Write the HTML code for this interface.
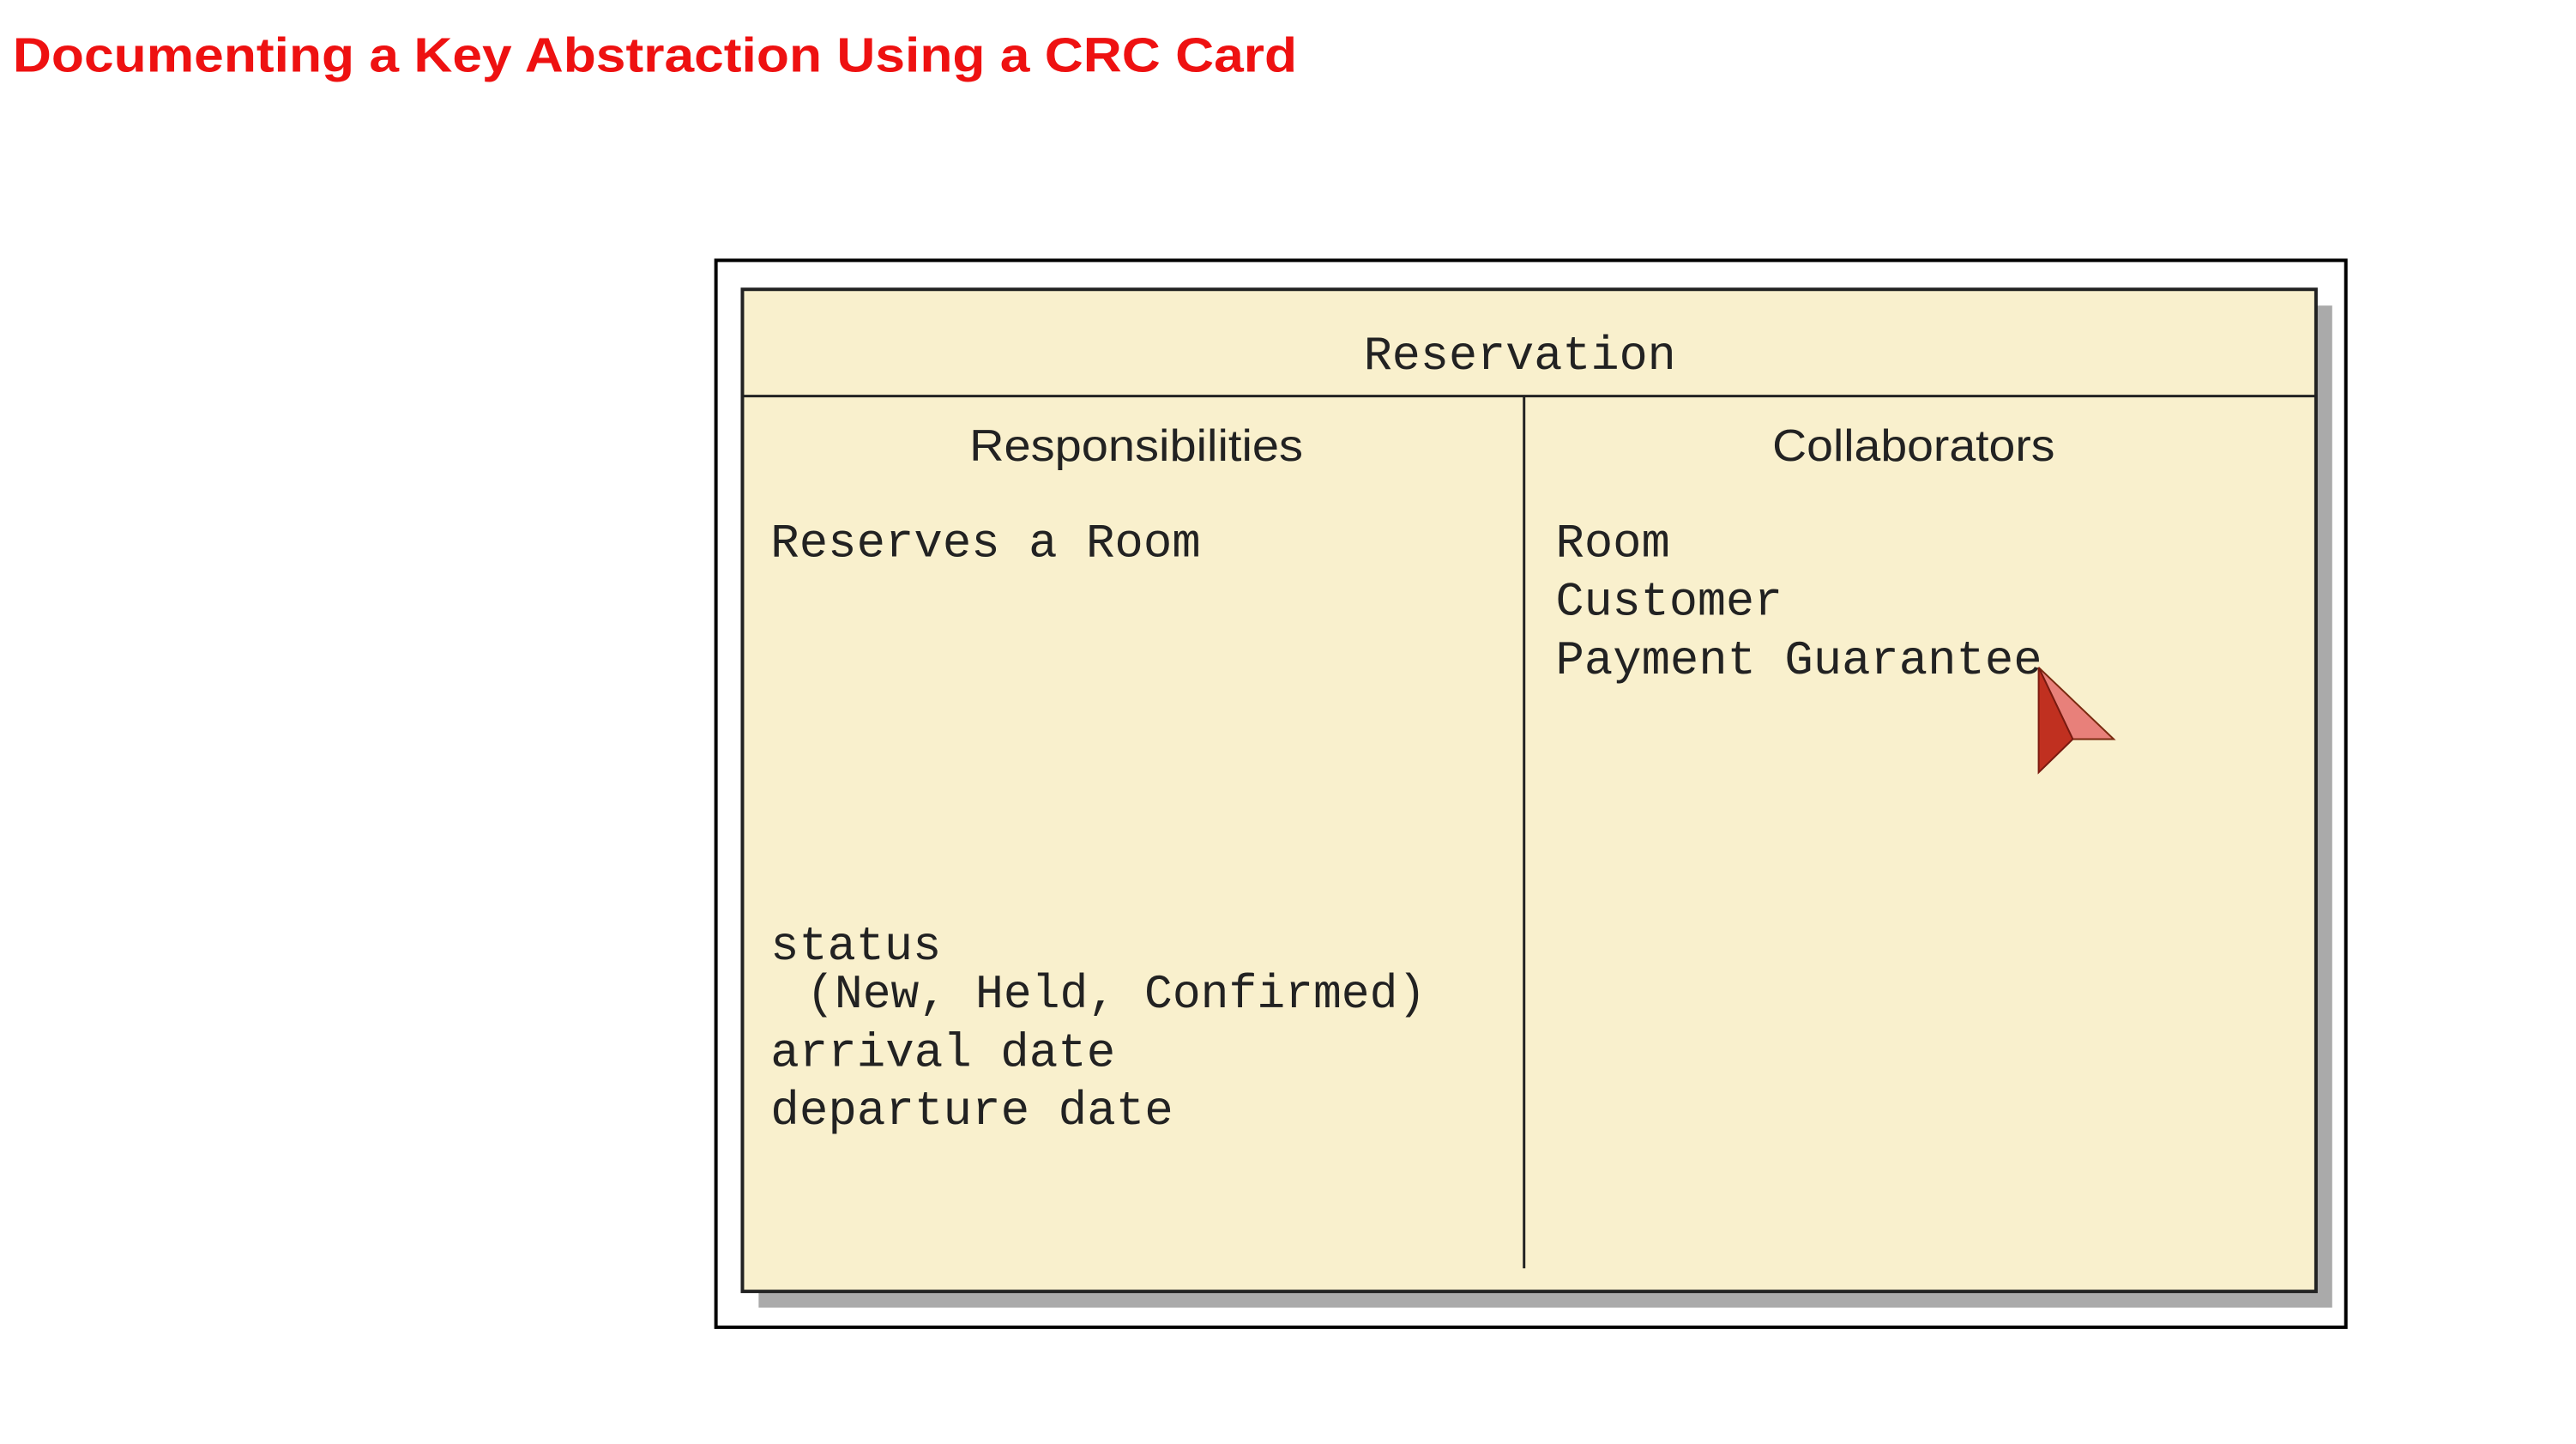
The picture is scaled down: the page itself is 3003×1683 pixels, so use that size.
<!DOCTYPE html>
<html><head><meta charset="utf-8"><style>
html,body{margin:0;padding:0;background:#fff;}
svg{display:block;}
</style></head><body>
<svg width="3003" height="1683" viewBox="0 0 3003 1683" xmlns="http://www.w3.org/2000/svg">
<g transform="scale(0.9948)">
<text x="15" y="84" font-family="Liberation Sans, Arial, sans-serif" font-weight="bold" font-size="57" fill="#ee1111" textLength="1505" lengthAdjust="spacingAndGlyphs">Documenting a Key Abstraction Using a CRC Card</text>
<rect x="839" y="305" width="1910" height="1250" fill="#fff" stroke="#000" stroke-width="4"/>
<rect x="889" y="358" width="1844" height="1174" fill="#aaaaaa"/>
<rect x="870" y="339" width="1844" height="1174" fill="#f9f0cd" stroke="#222" stroke-width="4"/>
<line x1="870" y1="464" x2="2714" y2="464" stroke="#222" stroke-width="3"/>
<line x1="1786" y1="464" x2="1786" y2="1486" stroke="#222" stroke-width="3"/>
<g font-family="Liberation Mono, Courier New, monospace" fill="#222" font-size="56">
<text x="1598" y="432" textLength="366" lengthAdjust="spacingAndGlyphs">Reservation</text>
<text x="903" y="652" textLength="504" lengthAdjust="spacingAndGlyphs">Reserves a Room</text>
<text x="1823" y="652" textLength="134" lengthAdjust="spacingAndGlyphs">Room</text>
<text x="1823" y="720" textLength="266" lengthAdjust="spacingAndGlyphs">Customer</text>
<text x="1823" y="789" textLength="570" lengthAdjust="spacingAndGlyphs">Payment Guarantee</text>
<text x="903" y="1124" textLength="200" lengthAdjust="spacingAndGlyphs">status</text>
<text x="945" y="1180" textLength="726" lengthAdjust="spacingAndGlyphs">(New, Held, Confirmed)</text>
<text x="903" y="1249" textLength="404" lengthAdjust="spacingAndGlyphs">arrival date</text>
<text x="903" y="1317" textLength="472" lengthAdjust="spacingAndGlyphs">departure date</text>
</g>
<g font-family="Liberation Sans, Arial, sans-serif" fill="#222" font-size="52">
<text x="1136" y="540" textLength="391" lengthAdjust="spacingAndGlyphs">Responsibilities</text>
<text x="2077" y="540" textLength="331" lengthAdjust="spacingAndGlyphs">Collaborators</text>
</g>
<polygon points="2389,782 2477,866 2429,866" fill="#e8807a" stroke="#7a2a10" stroke-width="2"/>
<polygon points="2389,782 2429,866 2389,905" fill="#c03020" stroke="#7a1a10" stroke-width="2"/>
</g>
</svg>
</body></html>
